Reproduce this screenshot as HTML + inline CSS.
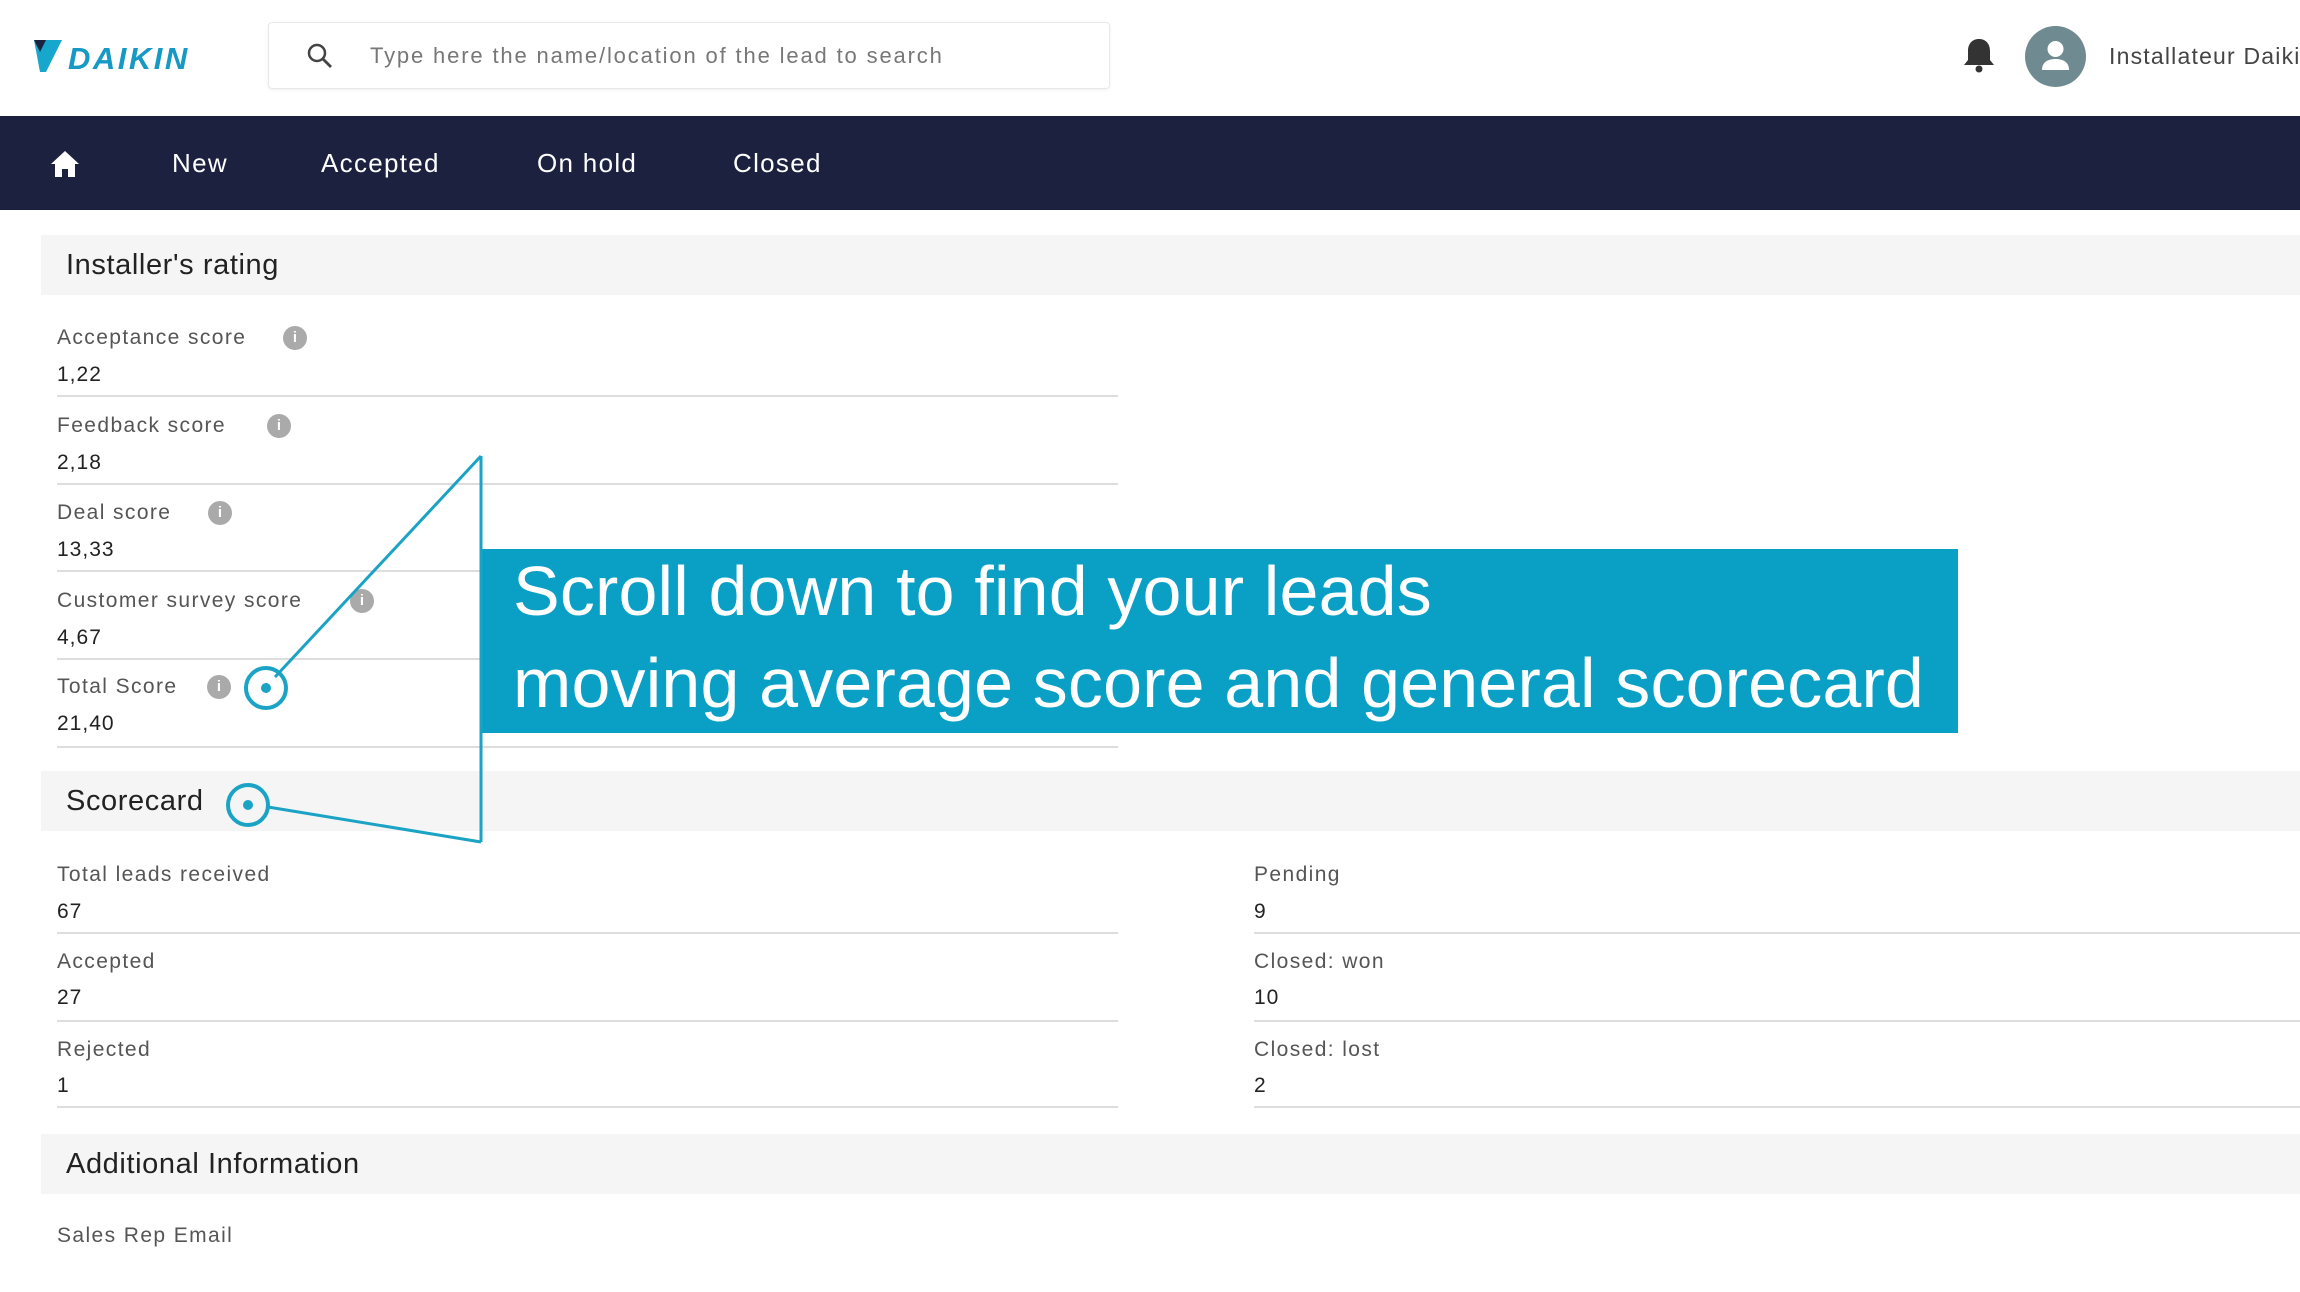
<!DOCTYPE html>
<html><head><meta charset="utf-8"><style>
*{margin:0;padding:0;box-sizing:border-box}
body{width:2300px;height:1292px;overflow:hidden;background:#fff;font-family:"Liberation Sans",sans-serif;position:relative}
.a{position:absolute;white-space:nowrap}
.lbl{font-size:21px;color:#555;line-height:26px;letter-spacing:1.4px}
.val{font-size:21px;color:#222;line-height:26px;letter-spacing:1px}
.ln{position:absolute;height:2px;background:#ddd}
.sec{position:absolute;left:41px;width:2259px;height:60px;background:#f5f5f5}
.sec span{position:absolute;left:25px;top:15px;font-size:29px;color:#222;line-height:30px;letter-spacing:0.6px}
.nav{font-size:26px;color:#fff;line-height:30px;top:148px;letter-spacing:1.3px}
.info{position:absolute;width:24px;height:24px;border-radius:50%;background:#aaa;color:#fff;font-size:15px;font-weight:bold;text-align:center;line-height:24px}
</style></head><body>
<svg class="a" style="left:32px;top:38px" width="180" height="36" viewBox="0 0 180 36">
<polygon points="2,2 30,2 14,34 8,34" fill="#17a6cc"/>
<polygon points="2,2 14,2 8,14" fill="#1a2340"/>
<text x="36" y="31" font-family="Liberation Sans" font-weight="bold" font-style="italic" font-size="31" fill="#1699c4" letter-spacing="2.5">DAIKIN</text>
</svg>
<div class="a" style="left:268px;top:22px;width:842px;height:67px;border:1px solid #e8e8e8;border-radius:4px;box-shadow:0 1px 3px rgba(0,0,0,.06)"></div>
<svg class="a" style="left:306px;top:42px" width="28" height="28" viewBox="0 0 28 28"><circle cx="11" cy="11" r="8" fill="none" stroke="#444" stroke-width="2.5"/><line x1="17" y1="17" x2="25" y2="25" stroke="#444" stroke-width="2.8"/></svg>
<div class="a" style="left:370px;top:42px;font-size:22px;color:#777;line-height:28px;letter-spacing:1.85px">Type here the name/location of the lead to search</div>
<svg class="a" style="left:1961px;top:36px" width="36" height="40" viewBox="0 0 36 40"><path d="M18 3c-7 0-11 5-11 12v9l-4 5h30l-4-5v-9c0-7-4-12-11-12z" fill="#333"/><circle cx="18" cy="33" r="3.5" fill="#333"/></svg>
<div class="a" style="left:2025px;top:26px;width:61px;height:61px;border-radius:50%;background:#6f8a90"></div>
<svg class="a" style="left:2025px;top:26px" width="61" height="61" viewBox="0 0 61 61"><circle cx="30.5" cy="23" r="8" fill="#fff"/><path d="M17 44c0-8 6-11 13.5-11s13.5 3 13.5 11z" fill="#fff"/></svg>
<div class="a" style="left:2109px;top:42px;font-size:23px;color:#444;line-height:28px;letter-spacing:1.2px">Installateur Daikin</div>
<div class="a" style="left:0;top:116px;width:2300px;height:94px;background:#1c2140"></div>
<svg class="a" style="left:50px;top:149px" width="30" height="30" viewBox="0 0 30 30"><path d="M15 2L1 15h4v13h7v-8h6v8h7V15h4z" fill="#fff"/></svg>
<div class="a nav" style="left:172px">New</div>
<div class="a nav" style="left:321px">Accepted</div>
<div class="a nav" style="left:537px">On hold</div>
<div class="a nav" style="left:733px">Closed</div>
<div class="sec" style="top:235px"><span>Installer's rating</span></div>
<div class="a lbl" style="left:57px;top:325px">Acceptance score</div><div class="info" style="left:283px;top:326px">i</div>
<div class="a val" style="left:57px;top:362px">1,22</div><div class="ln" style="left:57px;width:1061px;top:395px"></div>
<div class="a lbl" style="left:57px;top:413px">Feedback score</div><div class="info" style="left:267px;top:414px">i</div>
<div class="a val" style="left:57px;top:450px">2,18</div><div class="ln" style="left:57px;width:1061px;top:483px"></div>
<div class="a lbl" style="left:57px;top:500px">Deal score</div><div class="info" style="left:208px;top:501px">i</div>
<div class="a val" style="left:57px;top:537px">13,33</div><div class="ln" style="left:57px;width:1061px;top:570px"></div>
<div class="a lbl" style="left:57px;top:588px">Customer survey score</div><div class="info" style="left:350px;top:589px">i</div>
<div class="a val" style="left:57px;top:625px">4,67</div><div class="ln" style="left:57px;width:1061px;top:658px"></div>
<div class="a lbl" style="left:57px;top:674px">Total Score</div><div class="info" style="left:207px;top:675px">i</div>
<div class="a val" style="left:57px;top:711px">21,40</div><div class="ln" style="left:57px;width:1061px;top:746px"></div>
<div class="sec" style="top:771px"><span>Scorecard</span></div>
<div class="a lbl" style="left:57px;top:862px">Total leads received</div>
<div class="a val" style="left:57px;top:899px">67</div><div class="ln" style="left:57px;width:1061px;top:932px"></div>
<div class="a lbl" style="left:57px;top:949px">Accepted</div>
<div class="a val" style="left:57px;top:985px">27</div><div class="ln" style="left:57px;width:1061px;top:1020px"></div>
<div class="a lbl" style="left:57px;top:1037px">Rejected</div>
<div class="a val" style="left:57px;top:1073px">1</div><div class="ln" style="left:57px;width:1061px;top:1106px"></div>
<div class="a lbl" style="left:1254px;top:862px">Pending</div>
<div class="a val" style="left:1254px;top:899px">9</div><div class="ln" style="left:1254px;width:1046px;top:932px"></div>
<div class="a lbl" style="left:1254px;top:949px">Closed: won</div>
<div class="a val" style="left:1254px;top:985px">10</div><div class="ln" style="left:1254px;width:1046px;top:1020px"></div>
<div class="a lbl" style="left:1254px;top:1037px">Closed: lost</div>
<div class="a val" style="left:1254px;top:1073px">2</div><div class="ln" style="left:1254px;width:1046px;top:1106px"></div>
<div class="sec" style="top:1134px"><span>Additional Information</span></div>
<div class="a lbl" style="left:57px;top:1223px">Sales Rep Email</div>
<div class="a" style="left:481px;top:549px;width:1477px;height:184px;background:#0aa0c6"></div>
<div class="a" style="left:513px;top:545px;font-size:70px;color:#fff;line-height:92px;letter-spacing:0.15px">Scroll down to find your leads<br>moving average score and general scorecard</div>
<svg class="a" style="left:0;top:0" width="2300" height="1292">
<g fill="none" stroke="#1aa3c4" stroke-width="3">
<line x1="481" y1="456" x2="481" y2="842"/>
<line x1="481" y1="456" x2="275" y2="677"/>
<line x1="481" y1="842" x2="268" y2="807"/>
<circle cx="266" cy="688" r="20" stroke-width="4"/>
<circle cx="248" cy="805" r="20" stroke-width="4"/>
</g>
<circle cx="266" cy="688" r="5" fill="#1aa3c4"/><circle cx="248" cy="805" r="5" fill="#1aa3c4"/>
</svg>
</body></html>
